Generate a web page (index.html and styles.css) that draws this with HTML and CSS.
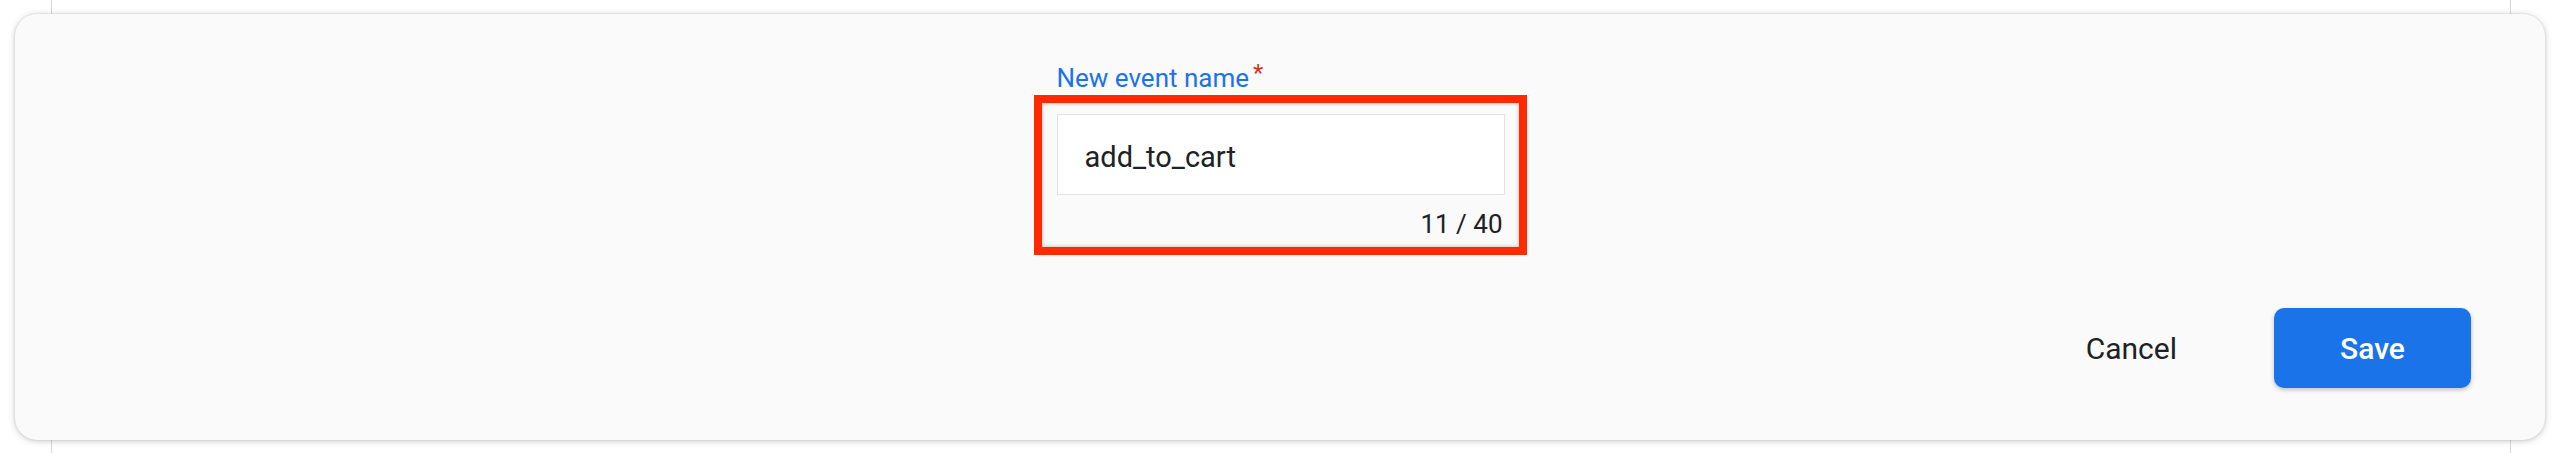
FILE: index.html
```html
<!DOCTYPE html>
<html lang="en">
<head>
<meta charset="utf-8">
<title>Edit event</title>
<link rel="stylesheet" href="styles.css">
</head>
<body>
<div class="frame"></div>
<div class="dialog">
  <div class="field">
    <label class="field-label" for="evt">New event name<span class="req">*</span></label>
    <div class="highlight">
      <div class="input-box" id="evt">add_to_cart</div>
      <div class="counter">11 / 40</div>
    </div>
  </div>
  <div class="actions">
    <button class="btn btn-text">Cancel</button>
    <button class="btn btn-primary">Save</button>
  </div>
</div>
</body>
</html>
```

FILE: styles.css
```css
html, body {
  margin: 0;
  padding: 0;
  background: #ffffff;
  height: 453px;
  overflow: hidden;
  font-family: Roboto, "Noto Sans", "Liberation Sans", sans-serif;
}

.frame {
  margin-left: 51px;
  width: 2458px;
  height: 453px;
  border-left: 1px solid #d6d6d6;
  border-right: 1px solid #d6d6d6;
}

.dialog {
  position: absolute;
  left: 15px;
  top: 14px;
  width: 2530px;
  height: 426px;
  box-sizing: border-box;
  background: #fafafa;
  border-radius: 22px;
  box-shadow: 0 1px 6px rgba(60, 64, 67, 0.28), 0 0 2px rgba(60, 64, 67, 0.18);
  padding: 49px 74px 52px 0;
  display: flex;
  flex-direction: column;
}

.field {
  align-self: center;
  width: 493px;
  margin-left: 74px;
  display: flex;
  flex-direction: column;
}

.field-label {
  display: block;
  height: 30px;
  overflow: visible;
  margin-left: 23px;
  font-size: 26px;
  line-height: 30px;
  color: #1a73e8;
  margin-bottom: 2px;
}

.req {
  color: #d93025;
  font-size: 24px;
  line-height: 20px;
  vertical-align: top;
  margin-left: 4px;
}

.highlight {
  border: 8px solid #ff2a00;
  box-shadow: inset 0 0 4px rgba(0, 0, 0, 0.28);
  padding: 11px 14px 8px 15px;
  height: 160px;
  box-sizing: border-box;
  display: flex;
  flex-direction: column;
}

.input-box {
  height: 81px;
  box-sizing: border-box;
  background: #ffffff;
  border: 1px solid #e3e3e3;
  padding: 26px 0 0 27px;
  font-size: 29px;
  line-height: 32px;
  color: #202124;
}

.counter {
  margin-top: 14px;
  align-self: flex-end;
  margin-right: 2px;
  font-size: 26px;
  line-height: 30px;
  color: #202124;
}

.actions {
  margin-top: 53px;
  display: flex;
  justify-content: flex-end;
  gap: 73px;
}

.btn {
  height: 80px;
  border: none;
  font-family: Roboto, "Noto Sans", "Liberation Sans", sans-serif;
  font-size: 30px;
  cursor: pointer;
}

.btn-text {
  background: transparent;
  color: #202124;
  padding: 0 24px;
}

.btn-primary {
  width: 197px;
  background: #1a73e8;
  color: #ffffff;
  font-weight: 500;
  border-radius: 10px;
  box-shadow: 0 2px 4px rgba(60, 64, 67, 0.3);
}
```
